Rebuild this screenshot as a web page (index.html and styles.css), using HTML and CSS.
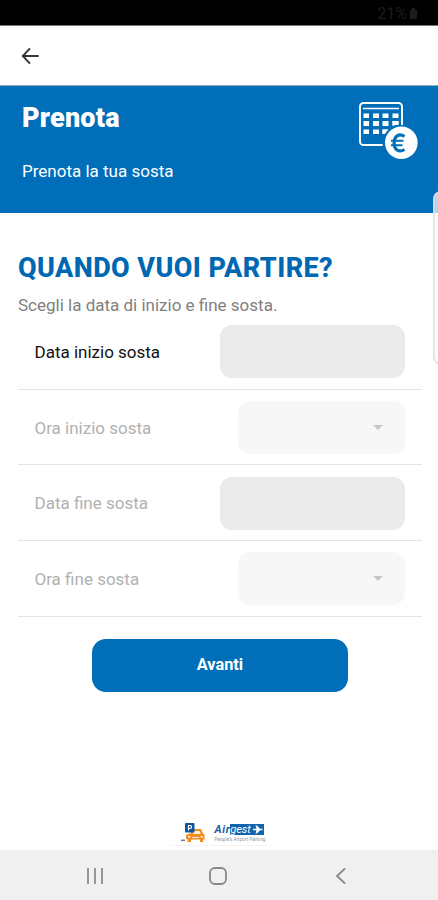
FILE: index.html
```html
<!DOCTYPE html>
<html lang="it">
<head>
<meta charset="utf-8">
<meta name="viewport" content="width=device-width, initial-scale=1">
<title>Prenota</title>
<link rel="stylesheet" href="styles.css">
</head>
<body>
<div class="screen">
  <div class="status"><span class="status-text">21%</span><svg width="11" height="14" viewBox="0 0 11 14"><path d="M2 3h2V1h3v2h2v9H2z" fill="#1c1c1c"/></svg></div>
  <nav class="appbar">
    <svg width="20" height="20" viewBox="0 0 20 20" fill="none" stroke="#333" stroke-width="1.9"><path d="M18.600 10H3M10 2.300L2.800 10l7.200 7.700"/></svg>
  </nav>
  <header class="hero">
    <div class="hero-text">
      <h1 class="hero-title">Prenota</h1>
      <p class="hero-sub">Prenota la tua sosta</p>
    </div>
    <svg class="hero-icon" width="60" height="60" viewBox="0 0 60 60">
      <rect x="2" y="3" width="42" height="42" rx="3.500" fill="none" stroke="#fff" stroke-width="1.900"/>
      <path d="M5 8.500h36" stroke="#fff" stroke-width="1.500"/>
      <g fill="#fff">
        <path d="M5.500 13.500H11V18H5.500zM15 13.500h6V18h-6zM24.500 13.500h6V18h-6zM34.500 13.500h6V18h-6z"/>
        <path d="M5.500 21H11v5H5.500zM15 21h6v5h-6zM24.500 21h6v5h-6zM34.500 21h6v5h-6z"/>
        <path d="M5.500 29.500H11V34H5.500zM15 29.500h6V34h-6zM24.500 29.500h6V34h-6z"/>
      </g>
      <circle cx="43.500" cy="43" r="19" fill="#006eb9"/>
      <path d="M24.500 29.500h5.800l-3.600 4.500h-2.200z" fill="#fff"/>
      <path d="M34.500 21h6v4h-6z" fill="#fff"/>
      <path d="M44 20v5" stroke="#fff" stroke-width="1.900"/>
      <circle cx="43.300" cy="42.800" r="16.300" fill="#fff"/>
      <path d="M46.500 36.500c-5.800-3.800-10.400 0-10.400 6.500s4.600 10.100 10.400 6.500" fill="none" stroke="#006eb9" stroke-width="3.200"/>
      <path d="M33 40.700h12.500M33 45.200h11.500" stroke="#006eb9" stroke-width="2"/>
    </svg>
  </header>
  <main class="content">
    <h2 class="heading">QUANDO VUOI PARTIRE?</h2>
    <p class="lead">Scegli la data di inizio e fine sosta.</p>
    <div class="rows">
      <div class="row active"><span class="label">Data inizio sosta</span><div class="field"></div></div>
      <div class="row"><span class="label">Ora inizio sosta</span><div class="field select"><i class="caret"></i></div></div>
      <div class="row"><span class="label">Data fine sosta</span><div class="field"></div></div>
      <div class="row"><span class="label">Ora fine sosta</span><div class="field select"><i class="caret"></i></div></div>
    </div>
    <button class="next" type="button">Avanti</button>
  </main>
  <footer class="brand">
    <svg width="26" height="22" viewBox="0 0 26 22">
      <path d="M1 19.300h4" stroke="#777" stroke-width="1.500"/>
      <path d="M12 8h9l2 4.500 1.500 1v5H23V21h-3v-2.500h-9V21H7.500v-3H6v-4l5-2z" fill="#f58a1f"/>
      <path d="M14.500 10h5l1.200 3h-8zM8 15h2.500v1.500H8zM20.500 15H23v1.500h-2.500zM12 16h7v1h-7z" fill="#fff0dc"/>
      <rect x="5" y="2" width="9.500" height="9.500" rx="1" fill="#0c559f"/>
      <path d="M8.500 9.500v-5h1.600a1.500 1.500 0 0 1 0 3H8.500" fill="none" stroke="#fff" stroke-width="1.200"/>
    </svg>
    <div class="wordmark">
      <div class="name"><span class="air">Air</span><span class="gest">gest<svg width="13" height="9" viewBox="0 0 13 9"><path d="M2 3.800h3.500L4.500 .5H6l3 3.300h2.500v1.400H9L6 8.500H4.500l1-3.300H2z" fill="#fff"/></svg></span></div>
      <div class="tagline">People's Airport Parking</div>
    </div>
  </footer>
  <div class="navbar">
    <svg width="22" height="22" viewBox="0 0 22 22" stroke="#888" stroke-width="1.700"><path d="M4 3v16M11 3v16M18 3v16"/></svg>
    <svg width="22" height="22" viewBox="0 0 22 22" fill="none" stroke="#888" stroke-width="1.800"><rect x="3" y="3" width="16" height="16" rx="5"/></svg>
    <svg width="22" height="22" viewBox="0 0 22 22" fill="none" stroke="#888" stroke-width="1.800"><path d="M15 3.500L7 11l8 7.500"/></svg>
  </div>
  <div class="edge-handle"></div>
</div>
</body>
</html>
```
FILE: styles.css
```css
* { box-sizing: border-box; }
body { margin: 0; background: #fff; font-family: Roboto, "Liberation Sans", sans-serif; }
h1, h2, p { margin: 0; }
svg { display: block; flex: none; }
.screen { position: relative; display: flex; flex-direction: column; width: 438px; height: 900px; overflow: hidden; }

.status { display: flex; align-items: center; justify-content: flex-end; gap: 1px; height: 26px; padding: 3px 19px 0 0; background: #000; border-bottom: 1px solid #777; color: #1c1c1c; }
.status-text { font-size: 16px; line-height: 20px; }
.appbar { display: flex; align-items: center; height: 60px; padding-left: 20px; background: #fff; border-bottom: 1px solid #8fabc2; }

.hero { display: flex; justify-content: space-between; height: 127px; padding: 14px 20px 0 22px; background: #006eb9; color: #fff; }
.hero-title { padding-top: 1px; font-size: 27px; line-height: 35px; font-weight: 900; letter-spacing: .2px; }
.hero-sub { margin-top: 25px; font-size: 17px; line-height: 20px; }

.content { display: flex; flex-direction: column; padding: 38px 16px 0 18px; }
.heading { font-size: 27px; line-height: 34px; font-weight: 800; letter-spacing: .42px; color: #0067b3; white-space: nowrap; }
.lead { margin-top: 9px; font-size: 17px; line-height: 22px; color: #808080; }
.rows { margin-top: -2px; }
.row { display: flex; align-items: center; justify-content: space-between; height: 75.7px; padding: 1px 17px 0 16.5px; border-bottom: 1.5px solid #e4e4e4; }
.label { font-size: 17px; color: #b1b1b1; }
.active .label { padding-top: 1px; color: #111; }
.field { display: flex; align-items: center; justify-content: flex-end; width: 185.5px; height: 53px; border-radius: 12px; background: #eaeaea; }
.select { width: 167px; padding-right: 22px; background: #f7f7f7; }
.caret { border: 5px solid transparent; border-top-color: #c8c8c8; border-bottom: 0; }
.next { align-self: center; width: 256px; height: 53px; margin-top: 22px; padding-bottom: 3px; border: 0; border-radius: 14px; background: #006eb9; color: #fff; font: 700 16.3px Roboto, sans-serif; }

.brand { display: flex; gap: 9px; width: 97px; height: 25px; margin: auto auto 4px; padding-left: 9px; border-bottom: 1px solid #f4f4f4; }
.wordmark { padding-top: 3px; }
.name { display: flex; height: 11px; font-size: 11px; line-height: 11px; font-weight: 700; font-style: italic; }
.air { letter-spacing: .6px; color: #1d5c9d; }
.gest { display: flex; align-items: center; background: #1264ac; color: #fff; font-weight: 400; }
.tagline { margin-top: 2px; font-size: 4.8px; line-height: 5px; color: #8e9ba5; white-space: nowrap; }
.navbar { display: flex; align-items: center; justify-content: space-between; height: 50px; padding: 2px 86px 0 84px; background: #f0f0f0; }
.edge-handle { position: absolute; top: 191px; left: 433px; width: 16px; height: 174px; border: 2px solid rgba(220, 220, 220, .75); border-radius: 9px; background: rgba(255, 255, 255, .7); }
```
